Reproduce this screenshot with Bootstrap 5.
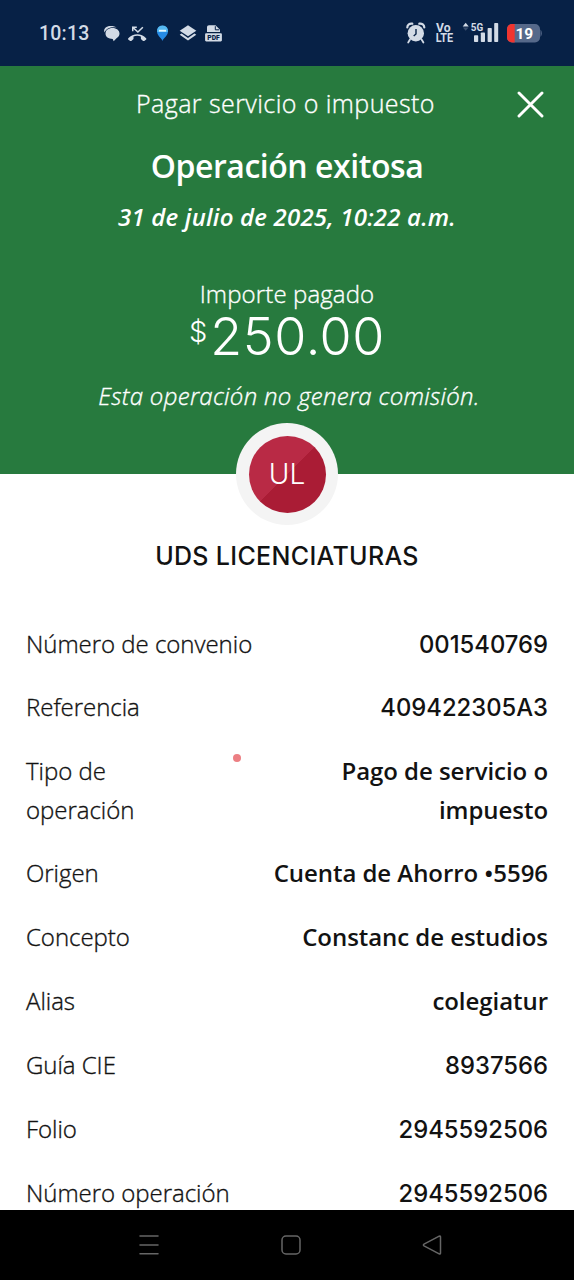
<!DOCTYPE html>
<html lang="es">
<head>
<meta charset="utf-8">
<meta name="viewport" content="width=device-width, initial-scale=1">
<title>Operación exitosa</title>
<link href="https://cdn.jsdelivr.net/npm/bootstrap@5.3.0/dist/css/bootstrap.min.css" rel="stylesheet">
<style>
  body { font-family: "Open Sans", sans-serif; color: #121212; background: #fff; }
  .screen { width: 574px; height: 1280px; }
  .statusbar { height: 66px; background: #072146; color: #d3dbe6; font-family: Roboto, sans-serif; padding: 0 32px 0 39px; }
  .clock { font-size: 19.5px; font-weight: 500; letter-spacing: .2px; line-height: 24px; width: 73px; padding-top: 1px; }
  .statusbar svg { display: block; overflow: visible; flex: none; }
  .hero { height: 408px; background: #277a3e; color: #fff; padding-top: 18px; font-size: 24px; font-weight: 300; line-height: 38px; }
  .hero-top { font-size: 25px; letter-spacing: .43px; padding-right: 3px; }
  .hero-top, .amount-label, .fee, .details dt { -webkit-text-stroke: .35px currentColor; }
  .close-x { right: 30px; top: 25px; line-height: 0; }
  .hero-title { font-size: 32px; font-weight: 600; line-height: 44px; letter-spacing: -.45px; margin: 22px 0 10px; }
  .hero-date { font-weight: 600; letter-spacing: .2px; }
  .amount-label { margin-top: 39px; letter-spacing: .12px; }
  .amount { font-family: Inter, sans-serif; font-size: 52px; line-height: 48px; margin: 0 0 16px; letter-spacing: .6px; }
  .currency { font-size: 29px; line-height: 38px; letter-spacing: 0; margin-right: 3px; }
  .fee { letter-spacing: .3px; padding-left: 4px; }
  .avatar { width: 102px; height: 102px; margin-top: -51px; background: #f4f4f4; }
  .avatar-disc { width: 77px; height: 77px; color: #fff; font: 300 28px/1 Inter, sans-serif; background: linear-gradient(135deg, #b92a45 50%, #aa1c35 50%); }
  .payee { font: 500 25px/38px Inter, sans-serif; letter-spacing: .33px; margin: 12px 0 49.500px; }
  .details { padding: 0 26px; font-size: 24px; line-height: 38.4px; gap: 25.450px; height: 585.5px; }
  .details dt { font-weight: 300; letter-spacing: -.03px; }
  .details dd { font-weight: 600; text-align: right; letter-spacing: -.05px; }
  .details dd.digits { font-family: Inter, sans-serif; font-weight: 550; font-size: 23.800px; line-height: 34px; letter-spacing: 0; }
  .touch { left: 233px; top: 754px; width: 8px; height: 8px; background: #ec7f83; }
  .sysnav { height: 70px; background: #000; padding: 0 131px 0 138px; }
</style>
</head>
<body>
<div class="screen position-relative d-flex flex-column overflow-hidden">
  <div class="statusbar d-flex align-items-center justify-content-between flex-shrink-0">
    <div class="d-flex align-items-center">
      <span class="clock">10:13</span>
      <svg width="112" height="24" viewBox="112 21 112 24">
        <g fill="#d3dbe6">
          <path d="M104.500 32.500c-1.500-4 2-6.500 6-6.500 3 0 5 .6 6.300 1.600-5-1.200-10.500.2-12.300 4.900z"/>
          <path d="M112.500 28c4 0 7 2.300 7 5.600 0 2-1.100 3.700-3 4.700l-2.800 3-1-2.300c-4.300 0-7.200-2-7.200-5.400s3-5.600 7-5.600z"/>
          <path d="M128.300 38.200c4.800-5.300 13.200-5.300 17.800 0 .5.600.3 1.100-.2 1.500l-1.700 1.200c-.5.300-1 .2-1.400-.2l-1.900-1.700v-2.400c-2.300-1-5.100-1-7.400 0v2.400l-1.900 1.700c-.4.400-.9.500-1.400.2l-1.700-1.200c-.5-.4-.7-.9-.2-1.500z"/>
          <path d="M132 26.500h4.800V28h-2.200l3.300 3 4.400-4.300 1.100 1.100-5.500 5.300-4.400-4v2.200H132z"/>
          <path d="m188 25.300 8.300 5.500-8.300 5.500-8.300-5.500z"/>
          <path d="m179.700 34.800 1.900-1.200 6.400 4.300 6.400-4.300 1.900 1.200-8.300 5.700z"/>
          <path d="M207 32v-4.800c0-1.200.8-2 2-2h6.500l4.500 4.500V32zM206.300 33.300h14.400c.7 0 1.200.5 1.200 1.200v5.800c0 .7-.5 1.200-1.200 1.200h-14.400c-.7 0-1.200-.5-1.200-1.200v-5.800c0-.7.5-1.200 1.200-1.200z"/>
        </g>
        <path d="M215.300 26.200v3.600h3.900" fill="none" stroke="#072146" stroke-width="1"/>
        <text x="213.500" y="40" font-size="7" font-weight="900" text-anchor="middle" fill="#072146" textLength="12.500" lengthAdjust="spacingAndGlyphs">PDF</text>
        <path d="M162.500 41c-1-3.500-5.500-5-5.500-9.800a5.500 5.500 0 0 1 11 0c0 4.800-4.500 6.300-5.500 9.800z" fill="#258be6"/>
        <path d="M157.200 29.500a5.500 5.500 0 0 1 10.600 0v2.600h-10.600z" fill="#55b9f2"/>
        <path d="M159 30.700h7" stroke="#e5f7ff" stroke-width="1.800"/>
      </svg>
    </div>
    <svg width="136" height="26" viewBox="406 20 136 26">
      <g fill="#d3dbe6">
        <circle cx="415.800" cy="33.300" r="8.200"/>
        <path d="m410 39.500-1.800 3M421.600 39.500l1.800 3" stroke="#d3dbe6" stroke-width="1.800" stroke-linecap="round"/>
        <path d="M407.300 27.500c0-2.500 2.300-4.300 5-3.800M424.300 27.500c0-2.500-2.300-4.300-5-3.800" fill="none" stroke="#d3dbe6" stroke-width="2.200" stroke-linecap="round"/>
        <path d="M416 29v5l-2.300 2" fill="none" stroke="#072146" stroke-width="1.400"/>
        <text x="436" y="31.500" font-size="12" font-weight="700" textLength="14.500" lengthAdjust="spacingAndGlyphs">Vo</text>
        <text x="435.700" y="42" font-size="12.500" font-weight="700" textLength="17.500" lengthAdjust="spacingAndGlyphs">LTE</text>
        <path d="m465.700 22.700 3 3.800h-6z"/>
        <path d="m465.700 30.800 2.800-3.300h-5.600z" opacity=".25"/>
        <text x="470.800" y="31" font-size="11.500" font-weight="700" textLength="12.400" lengthAdjust="spacingAndGlyphs">5G</text>
        <rect x="474" y="35.300" width="4.200" height="6.700" rx=".8"/>
        <rect x="480.800" y="32.500" width="4.200" height="9.500" rx=".8"/>
        <rect x="487.600" y="28" width="4.200" height="14" rx=".8"/>
        <rect x="494.200" y="23" width="4" height="19" rx=".8"/>
      </g>
      <rect x="507" y="24" width="33" height="18.500" rx="5" fill="#56698a"/>
      <path d="M540.500 29.500c1.800 1.800 1.800 5.600 0 7.500z" fill="#56698a"/>
      <path d="M514.700 24v18.500H512a5 5 0 0 1-5-5V29a5 5 0 0 1 5-5z" fill="#f0352f"/>
      <text x="524.300" y="39" font-size="15.500" font-weight="700" fill="#fff" text-anchor="middle">19</text>
    </svg>
  </div>

  <header class="hero position-relative flex-shrink-0 text-center">
    <div class="hero-top">Pagar servicio o impuesto</div>
    <a class="close-x position-absolute" href="#" aria-label="Cerrar"><svg width="27" height="27" viewBox="0 0 27 27" fill="none" stroke="#fff" stroke-width="2.900" stroke-linecap="round"><path d="m2 2 23 23M25 2 2 25"/></svg></a>
    <h1 class="hero-title">Operación exitosa</h1>
    <div class="hero-date fst-italic">31 de julio de 2025, 10:22 a.m.</div>
    <div class="amount-label">Importe pagado</div>
    <div class="amount d-flex justify-content-center"><span class="currency">$</span><span>250.00</span></div>
    <div class="fee fst-italic">Esta operación no genera comisión.</div>
  </header>

  <div class="avatar rounded-circle position-relative flex-shrink-0 mx-auto d-flex align-items-center justify-content-center">
    <div class="avatar-disc rounded-circle d-flex align-items-center justify-content-center">UL</div>
  </div>
  <h2 class="payee text-center flex-shrink-0">UDS LICENCIATURAS</h2>

  <div class="details d-flex flex-column flex-shrink-0 overflow-hidden">
    <dl class="d-flex justify-content-between align-items-baseline m-0"><dt>Número de convenio</dt><dd class="m-0 digits">001540769</dd></dl>
    <dl class="d-flex justify-content-between align-items-baseline m-0"><dt>Referencia</dt><dd class="m-0 digits">409422305A3</dd></dl>
    <dl class="d-flex justify-content-between align-items-baseline m-0"><dt>Tipo de<br>operación</dt><dd class="m-0">Pago de servicio o<br>impuesto</dd></dl>
    <dl class="d-flex justify-content-between align-items-baseline m-0"><dt>Origen</dt><dd class="m-0">Cuenta de Ahorro •5596</dd></dl>
    <dl class="d-flex justify-content-between align-items-baseline m-0"><dt>Concepto</dt><dd class="m-0">Constanc de estudios</dd></dl>
    <dl class="d-flex justify-content-between align-items-baseline m-0"><dt>Alias</dt><dd class="m-0">colegiatur</dd></dl>
    <dl class="d-flex justify-content-between align-items-baseline m-0"><dt>Guía CIE</dt><dd class="m-0 digits">8937566</dd></dl>
    <dl class="d-flex justify-content-between align-items-baseline m-0"><dt>Folio</dt><dd class="m-0 digits">2945592506</dd></dl>
    <dl class="d-flex justify-content-between align-items-baseline m-0"><dt>Número operación</dt><dd class="m-0 digits">2945592506</dd></dl>
  </div>
  <span class="touch position-absolute rounded-circle"></span>

  <nav class="sysnav d-flex align-items-center justify-content-between flex-shrink-0">
    <svg width="22" height="22" viewBox="0 0 22 22" fill="none" stroke="#666" stroke-width="1.500" stroke-linecap="round"><path d="M2 2h18M2 11h18M2 19.800h18"/></svg>
    <svg width="22" height="22" viewBox="0 0 22 22" fill="none" stroke="#666" stroke-width="1.500"><rect x="2" y="2" width="18" height="18" rx="4"/></svg>
    <svg width="22" height="22" viewBox="0 0 22 22" fill="none" stroke="#666" stroke-width="1.500" stroke-linejoin="round"><path d="M3 10.200 18.200 2.200q1.300-.5 1.300.9v15.800q0 1.400-1.300.9L3 11.800q-1.200-.8 0-1.600z"/></svg>
  </nav>
</div>
<script src="https://cdn.jsdelivr.net/npm/bootstrap@5.3.0/dist/js/bootstrap.bundle.min.js"></script>
</body>
</html>
